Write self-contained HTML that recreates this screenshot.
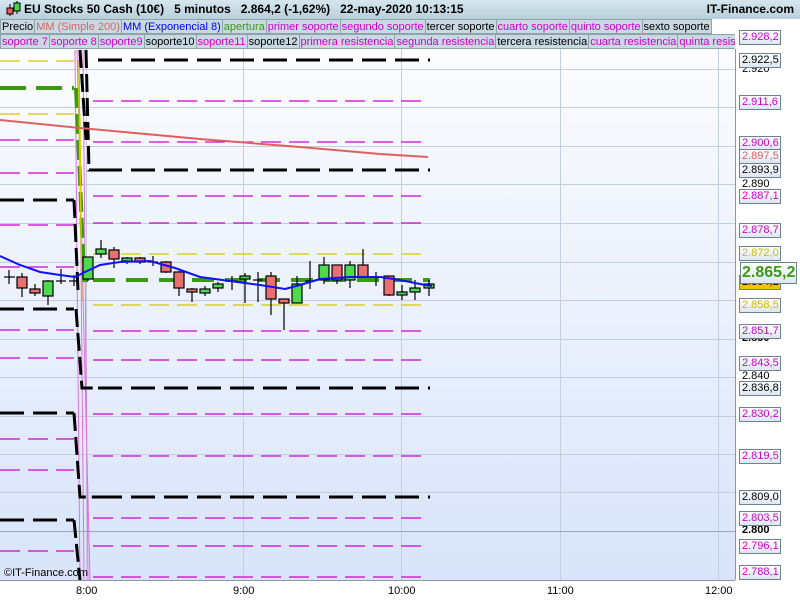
<!DOCTYPE html>
<html><head><meta charset="utf-8"><style>
*{margin:0;padding:0;box-sizing:border-box}
body{width:800px;height:600px;overflow:hidden;background:#fff;font-family:"Liberation Sans",sans-serif;position:relative}
#hdr{position:absolute;left:0;top:0;width:800px;height:19px;background:linear-gradient(#d6e6ee,#b8cfda);font-weight:bold;font-size:12px;line-height:19px;color:#000}
.leg{position:absolute;left:0;height:15px;width:800px;font-size:11px;line-height:14px;white-space:nowrap;overflow:hidden}
.leg span{display:inline-block;background:#c8d9e1;border:1px solid #8fa3ad;padding:0 1px;margin-right:-1px;height:15px}
.lab{position:absolute;left:739px;width:42px;height:15px;border:1px solid #6c8290;background:linear-gradient(#fff,#dde6f0);font-size:11px;line-height:13px;padding-left:2px}
.ax{position:absolute;font-size:11px}
</style></head><body>
<div id="hdr"><svg width="20" height="19" style="position:absolute;left:4px;top:0"><line x1="6" y1="4" x2="6" y2="16" stroke="#000"/><rect x="3" y="8" width="6" height="6" fill="#e46060" stroke="#000"/><line x1="13" y1="1" x2="13" y2="14" stroke="#000"/><rect x="10" y="3" width="6" height="8" fill="#49d449" stroke="#000"/></svg>
<span style="position:absolute;left:24px">EU Stocks 50 Cash (10€)&nbsp;&nbsp;&nbsp;5 minutos&nbsp;&nbsp;&nbsp;2.864,2 (-1,62%)&nbsp;&nbsp;&nbsp;22-may-2020 10:13:15</span><span style="position:absolute;right:6px">IT-Finance.com</span></div>

<svg width="800" height="600" style="position:absolute;left:0;top:0">
<defs><linearGradient id="bg" x1="0" y1="0" x2="0" y2="1"><stop offset="0" stop-color="#fbfcfe"/><stop offset="1" stop-color="#d9e4fa"/></linearGradient></defs>
<rect x="0" y="49" width="735" height="531" fill="url(#bg)"/>
<line x1="735.5" y1="49" x2="735.5" y2="580" stroke="#8898a8"/>
<line x1="0" y1="580.5" x2="735" y2="580.5" stroke="#8898a8"/>
<g stroke="#c4cedf" stroke-width="1">
<line x1="86.5" y1="49" x2="86.5" y2="580"/><line x1="243.5" y1="49" x2="243.5" y2="580"/><line x1="401.5" y1="49" x2="401.5" y2="580"/><line x1="560.5" y1="49" x2="560.5" y2="580"/><line x1="718.5" y1="49" x2="718.5" y2="580"/>
<line x1="0" y1="69.5" x2="735" y2="69.5"/><line x1="0" y1="107.5" x2="735" y2="107.5"/><line x1="0" y1="146.5" x2="735" y2="146.5"/><line x1="0" y1="184.5" x2="735" y2="184.5"/><line x1="0" y1="223.5" x2="735" y2="223.5"/><line x1="0" y1="262.5" x2="735" y2="262.5"/><line x1="0" y1="300.5" x2="735" y2="300.5"/><line x1="0" y1="339.5" x2="735" y2="339.5"/><line x1="0" y1="377.5" x2="735" y2="377.5"/><line x1="0" y1="416.5" x2="735" y2="416.5"/><line x1="0" y1="454.5" x2="735" y2="454.5"/><line x1="0" y1="492.5" x2="735" y2="492.5"/>
</g>
<line x1="0" y1="531.5" x2="735" y2="531.5" stroke="#9aa8bc"/>
<g stroke="#d000d0" stroke-width="1.3" stroke-dasharray="20,8">
<line x1="93" y1="101" x2="428" y2="101"/><line x1="93" y1="142" x2="428" y2="142"/><line x1="93" y1="196" x2="428" y2="196"/><line x1="93" y1="223" x2="428" y2="223"/><line x1="93" y1="331" x2="428" y2="331"/><line x1="93" y1="360" x2="428" y2="360"/><line x1="93" y1="414" x2="428" y2="414"/><line x1="93" y1="456" x2="428" y2="456"/><line x1="93" y1="518" x2="428" y2="518"/><line x1="93" y1="546" x2="428" y2="546"/><line x1="93" y1="577" x2="428" y2="577"/>
</g>
<g stroke="#d4c800" stroke-width="1.3" stroke-dasharray="20,8"><line x1="93" y1="254" x2="428" y2="254"/><line x1="93" y1="305" x2="428" y2="305"/></g>
<g stroke="#000" stroke-width="3" stroke-dasharray="24,9"><line x1="98" y1="60" x2="430" y2="60"/><line x1="98" y1="170" x2="430" y2="170"/><line x1="98" y1="388" x2="430" y2="388"/><line x1="98" y1="497" x2="430" y2="497"/></g>
<g stroke="#d4c800" stroke-width="1.3" stroke-dasharray="20,8"><line x1="0" y1="61" x2="74" y2="61"/><line x1="0" y1="114" x2="74" y2="114"/></g>
<g stroke="#d000d0" stroke-width="1.3" stroke-dasharray="20,8"><line x1="0" y1="140" x2="74" y2="140"/><line x1="0" y1="173" x2="74" y2="173"/><line x1="0" y1="225" x2="74" y2="225"/><line x1="0" y1="267" x2="74" y2="267"/><line x1="0" y1="330" x2="74" y2="330"/><line x1="0" y1="358" x2="74" y2="358"/><line x1="0" y1="439" x2="74" y2="439"/><line x1="0" y1="470" x2="74" y2="470"/><line x1="0" y1="551" x2="74" y2="551"/></g>
<g stroke="#000" stroke-width="3" stroke-dasharray="24,9"><line x1="0" y1="200" x2="74" y2="200"/><line x1="0" y1="309" x2="74" y2="309"/><line x1="0" y1="413" x2="74" y2="413"/><line x1="0" y1="520" x2="74" y2="520"/></g>
<line x1="0" y1="88" x2="74" y2="88" stroke="#3a9a10" stroke-width="4" stroke-dasharray="26,10"/>
<g fill="none" stroke-width="1"><path d="M75 50 L80 580 M79 50 L84 580 M83 50 L88 580 M77 50 L90 580" stroke="#e070e0"/></g>
<path d="M76 88 L80 180 L84 280 L88 280" stroke="#3a9a10" stroke-width="4" fill="none" stroke-dasharray="20,6"/>
<path d="M86 50 L89 170 L98 170 M74 200 L78 290 M76 309 L82 388 L98 388 M74 413 L80 497 L98 497 M74 520 L80 580 M80 50 L86 140" stroke="#000" stroke-width="3" fill="none" stroke-dasharray="18,6"/>
<path d="M78 60 L82 300 M80 114 L82 300" stroke="#d4c800" stroke-width="1" fill="none"/>
<polyline points="0,120 80,128 200,139 300,147 380,154 428,157" fill="none" stroke="#e06060" stroke-width="2"/>
<line x1="93" y1="280" x2="430" y2="280" stroke="#3a9a10" stroke-width="4" stroke-dasharray="22,11"/>
<g stroke="#000" stroke-width="1.2">
<line x1="9" y1="270" x2="9" y2="284"/><line x1="4" y1="277" x2="15" y2="277"/>
<line x1="22" y1="273" x2="22" y2="297"/><rect x="17" y="277" width="10" height="11" fill="#e87070"/>
<line x1="35" y1="284" x2="35" y2="296"/><rect x="30" y="289" width="10" height="4" fill="#e87070"/>
<line x1="48" y1="280" x2="48" y2="305"/><rect x="43" y="281" width="10" height="15" fill="#50d850"/>
<line x1="61" y1="269" x2="61" y2="284"/><line x1="56" y1="281" x2="66" y2="281"/>
<line x1="74" y1="275" x2="74" y2="286"/><line x1="69" y1="281" x2="79" y2="281"/>
<line x1="88" y1="257" x2="88" y2="281"/><rect x="83" y="257" width="10" height="22" fill="#50d850"/>
<line x1="101" y1="240" x2="101" y2="258"/><rect x="96" y="249" width="10" height="5" fill="#50d850"/>
<line x1="114" y1="247" x2="114" y2="268"/><rect x="109" y="250" width="10" height="9" fill="#e87070"/>
<line x1="127" y1="257" x2="127" y2="264"/><rect x="122" y="258" width="10" height="3" fill="#50d850"/>
<line x1="140" y1="257" x2="140" y2="264"/><rect x="135" y="258" width="10" height="4" fill="#e87070"/>
<line x1="153" y1="256" x2="153" y2="266"/><line x1="148" y1="262" x2="158" y2="262"/>
<line x1="166" y1="261" x2="166" y2="273"/><rect x="161" y="262" width="10" height="10" fill="#e87070"/>
<line x1="179" y1="271" x2="179" y2="296"/><rect x="174" y="272" width="10" height="16" fill="#e87070"/>
<line x1="192" y1="288" x2="192" y2="302"/><rect x="187" y="289" width="10" height="3" fill="#e87070"/>
<line x1="205" y1="286" x2="205" y2="296"/><rect x="200" y="289" width="10" height="4" fill="#50d850"/>
<line x1="218" y1="282" x2="218" y2="292"/><rect x="213" y="284" width="10" height="4" fill="#50d850"/>
<line x1="232" y1="276" x2="232" y2="290"/><line x1="227" y1="281" x2="237" y2="281"/>
<line x1="245" y1="273" x2="245" y2="303"/><rect x="240" y="276" width="10" height="3" fill="#50d850"/>
<line x1="258" y1="272" x2="258" y2="302"/><line x1="253" y1="280" x2="263" y2="280"/>
<line x1="271" y1="272" x2="271" y2="315"/><rect x="266" y="276" width="10" height="23" fill="#e87070"/>
<line x1="284" y1="299" x2="284" y2="330"/><rect x="279" y="299" width="10" height="4" fill="#e87070"/>
<line x1="297" y1="276" x2="297" y2="303"/><rect x="292" y="284" width="10" height="19" fill="#50d850"/>
<line x1="310" y1="261" x2="310" y2="289"/><line x1="305" y1="281" x2="315" y2="281"/>
<line x1="324" y1="257" x2="324" y2="284"/><rect x="319" y="265" width="10" height="15" fill="#50d850"/>
<line x1="337" y1="265" x2="337" y2="284"/><rect x="332" y="265" width="10" height="15" fill="#e87070"/>
<line x1="350" y1="261" x2="350" y2="288"/><rect x="345" y="265" width="10" height="15" fill="#50d850"/>
<line x1="363" y1="249" x2="363" y2="278"/><rect x="358" y="265" width="10" height="12" fill="#e87070"/>
<line x1="376" y1="272" x2="376" y2="286"/><line x1="371" y1="277" x2="381" y2="277"/>
<line x1="389" y1="276" x2="389" y2="296"/><rect x="384" y="276" width="10" height="19" fill="#e87070"/>
<line x1="402" y1="285" x2="402" y2="300"/><rect x="397" y="292" width="10" height="3" fill="#50d850"/>
<line x1="415" y1="280" x2="415" y2="300"/><rect x="410" y="288" width="10" height="4" fill="#50d850"/>
<line x1="429" y1="280" x2="429" y2="296"/><rect x="424" y="284" width="10" height="4" fill="#50d850"/>
</g>
<polyline points="0,256 20,265 40,272 60,275 75,277 85,272 100,265 120,262 150,261 175,268 200,277 230,281 260,285 285,289 300,285 320,279 350,277 380,277 400,280 420,284 432,286" fill="none" stroke="#1010ff" stroke-width="2"/>
</svg>

<div class="leg" style="top:19px"><span>Precio</span><span style="color:#e06060">MM (Simple 200)</span><span style="color:#0000ff">MM (Exponencial 8)</span><span style="color:#3a9a10">apertura</span><span style="color:#d000d0">primer soporte</span><span style="color:#d000d0">segundo soporte</span><span>tercer soporte</span><span style="color:#d000d0">cuarto soporte</span><span style="color:#d000d0">quinto soporte</span><span>sexto soporte</span></div>
<div class="leg" style="top:34px;width:735px"><span style="color:#d000d0">soporte 7</span><span style="color:#d000d0">soporte 8</span><span style="color:#d000d0">soporte9</span><span>soporte10</span><span style="color:#d000d0">soporte11</span><span>soporte12</span><span style="color:#d000d0">primera resistencia</span><span style="color:#d000d0">segunda resistencia</span><span>tercera resistencia</span><span style="color:#d000d0">cuarta resistencia</span><span style="color:#d000d0">quinta resistencia</span></div>

<div class="ax" style="left:742px;top:63px">2.920</div>
<div class="ax" style="left:742px;top:178px">2.890</div>
<div class="ax" style="left:742px;top:370px">2.840</div>
<div class="ax" style="left:742px;top:524px;font-weight:bold">2.800</div>
<div class="ax" style="left:742px;top:332px;font-weight:bold">2.850</div>

<div class="lab" style="top:30px;color:#d000d0">2.928,2</div>
<div class="lab" style="top:53px">2.922,5</div>
<div class="lab" style="top:95px;color:#d000d0">2.911,6</div>
<div class="lab" style="top:136px;color:#d000d0">2.900,6</div>
<div class="lab" style="top:149px;color:#e06060">2.897,5</div>
<div class="lab" style="top:163px">2.893,9</div>
<div class="lab" style="top:189px;color:#d000d0">2.887,1</div>
<div class="lab" style="top:223px;color:#d000d0">2.878,7</div>
<div class="lab" style="top:246px;color:#c8c000">2.872,0</div>
<div class="lab" style="top:275px;background:#f4c000">2.864,2</div>
<div class="lab" style="top:262px;left:740px;width:57px;height:22px;font-size:16px;line-height:20px;font-weight:bold;color:#3a9a10;padding-left:1px">2.865,2</div>
<div class="lab" style="top:298px;color:#c8c000">2.858,5</div>
<div class="lab" style="top:324px;color:#d000d0">2.851,7</div>
<div class="lab" style="top:356px;color:#d000d0">2.843,5</div>
<div class="lab" style="top:381px">2.836,8</div>
<div class="lab" style="top:407px;color:#d000d0">2.830,2</div>
<div class="lab" style="top:449px;color:#d000d0">2.819,5</div>
<div class="lab" style="top:490px">2.809,0</div>
<div class="lab" style="top:511px;color:#d000d0">2.803,5</div>
<div class="lab" style="top:539px;color:#d000d0">2.796,1</div>
<div class="lab" style="top:565px;color:#d000d0">2.788,1</div>

<div class="ax" style="left:4px;top:567px;font-size:11px">©IT-Finance.com</div>
<div class="ax" style="left:76px;top:585px">8:00</div>
<div class="ax" style="left:233px;top:585px">9:00</div>
<div class="ax" style="left:388px;top:585px">10:00</div>
<div class="ax" style="left:547px;top:585px">11:00</div>
<div class="ax" style="left:705px;top:585px">12:00</div>
</body></html>
